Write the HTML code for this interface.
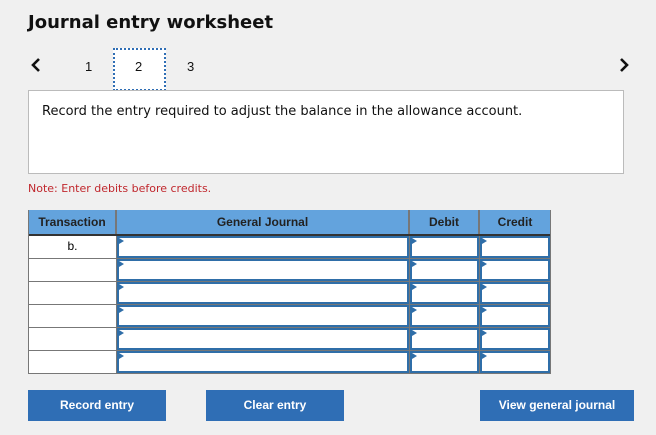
<!DOCTYPE html><html><head><style>
body{margin:0;width:656px;height:435px;background:#f0f0f0;font-family:"Liberation Sans",Arial,sans-serif;position:relative;overflow:hidden}
.a{position:absolute}
h1{position:absolute;left:28px;top:12px;margin:0;font-family:"DejaVu Sans",sans-serif;font-size:18px;font-weight:bold;color:#111}
.tab{font-size:13px;color:#111}
.cell{position:absolute;background:#fff;box-sizing:border-box}
.inp{position:absolute;background:#fff;border:2px solid #2f6ea8;box-sizing:border-box}
.inp:before{content:"";position:absolute;left:0;top:0;border-left:5px solid #2f6ea8;border-top:3px solid transparent;border-bottom:3px solid transparent}
.hd{position:absolute;background:#63a3dd;font-size:12px;font-weight:bold;color:#222;text-align:center;line-height:25px;top:210px;height:25px}
.btn{position:absolute;top:390px;height:31px;background:#2f6eb5;color:#fff;font-size:12px;font-weight:bold;text-align:center;line-height:31px}
</style></head><body>
<h1>Journal entry worksheet</h1>
<svg class="a" style="left:30px;top:57px" width="12" height="16"><path d="M9 2L3 8L9 14" stroke="#111" stroke-width="2.6" fill="none"/></svg>
<div class="a tab" style="left:85px;top:59px">1</div>
<div class="a" style="left:113px;top:48px;width:53px;height:43px;background:#fff;border:2px dotted #2f6eb5;box-sizing:border-box"></div>
<div class="a tab" style="left:135px;top:59px">2</div>
<div class="a tab" style="left:187px;top:59px">3</div>
<svg class="a" style="left:618px;top:57px" width="12" height="16"><path d="M3 2L9 8L3 14" stroke="#111" stroke-width="2.6" fill="none"/></svg>
<div class="a" style="left:28px;top:90px;width:596px;height:84px;background:#fff;border:1px solid #bbb;box-sizing:border-box"></div>
<div class="a" style="left:42px;top:104px;font-family:'DejaVu Sans',sans-serif;font-size:13px;color:#111">Record the entry required to adjust the balance in the allowance account.</div>
<div class="a" style="left:28px;top:182px;font-family:'DejaVu Sans',sans-serif;font-size:11px;color:#c0272d">Note: Enter debits before credits.</div>
<div class="a" style="left:28px;top:210px;width:523px;height:164px;background:#777"></div>
<div class="hd" style="left:29px;width:86px">Transaction</div>
<div class="hd" style="left:117px;width:291px">General Journal</div>
<div class="hd" style="left:410px;width:68px">Debit</div>
<div class="hd" style="left:480px;width:70px">Credit</div>
<div class="a" style="left:29px;top:234px;width:521px;height:2px;background:#333"></div>
<div class="cell" style="left:29px;top:236px;width:87px;height:22px;font-size:12px;text-align:center;line-height:20px">b.</div>
<div class="cell" style="left:29px;top:259px;width:87px;height:22px"></div>
<div class="cell" style="left:29px;top:282px;width:87px;height:22px"></div>
<div class="cell" style="left:29px;top:305px;width:87px;height:22px"></div>
<div class="cell" style="left:29px;top:328px;width:87px;height:22px"></div>
<div class="cell" style="left:29px;top:351px;width:87px;height:22px"></div>

<div class="inp" style="left:117px;top:236px;width:292px;height:22px"></div>
<div class="inp" style="left:410px;top:236px;width:69px;height:22px"></div>
<div class="inp" style="left:480px;top:236px;width:70px;height:22px"></div>
<div class="inp" style="left:117px;top:259px;width:292px;height:22px"></div>
<div class="inp" style="left:410px;top:259px;width:69px;height:22px"></div>
<div class="inp" style="left:480px;top:259px;width:70px;height:22px"></div>
<div class="inp" style="left:117px;top:282px;width:292px;height:22px"></div>
<div class="inp" style="left:410px;top:282px;width:69px;height:22px"></div>
<div class="inp" style="left:480px;top:282px;width:70px;height:22px"></div>
<div class="inp" style="left:117px;top:305px;width:292px;height:22px"></div>
<div class="inp" style="left:410px;top:305px;width:69px;height:22px"></div>
<div class="inp" style="left:480px;top:305px;width:70px;height:22px"></div>
<div class="inp" style="left:117px;top:328px;width:292px;height:22px"></div>
<div class="inp" style="left:410px;top:328px;width:69px;height:22px"></div>
<div class="inp" style="left:480px;top:328px;width:70px;height:22px"></div>
<div class="inp" style="left:117px;top:351px;width:292px;height:22px"></div>
<div class="inp" style="left:410px;top:351px;width:69px;height:22px"></div>
<div class="inp" style="left:480px;top:351px;width:70px;height:22px"></div>

<div class="btn" style="left:28px;width:138px">Record entry</div>
<div class="btn" style="left:206px;width:138px">Clear entry</div>
<div class="btn" style="left:480px;width:154px">View general journal</div>
</body></html>
